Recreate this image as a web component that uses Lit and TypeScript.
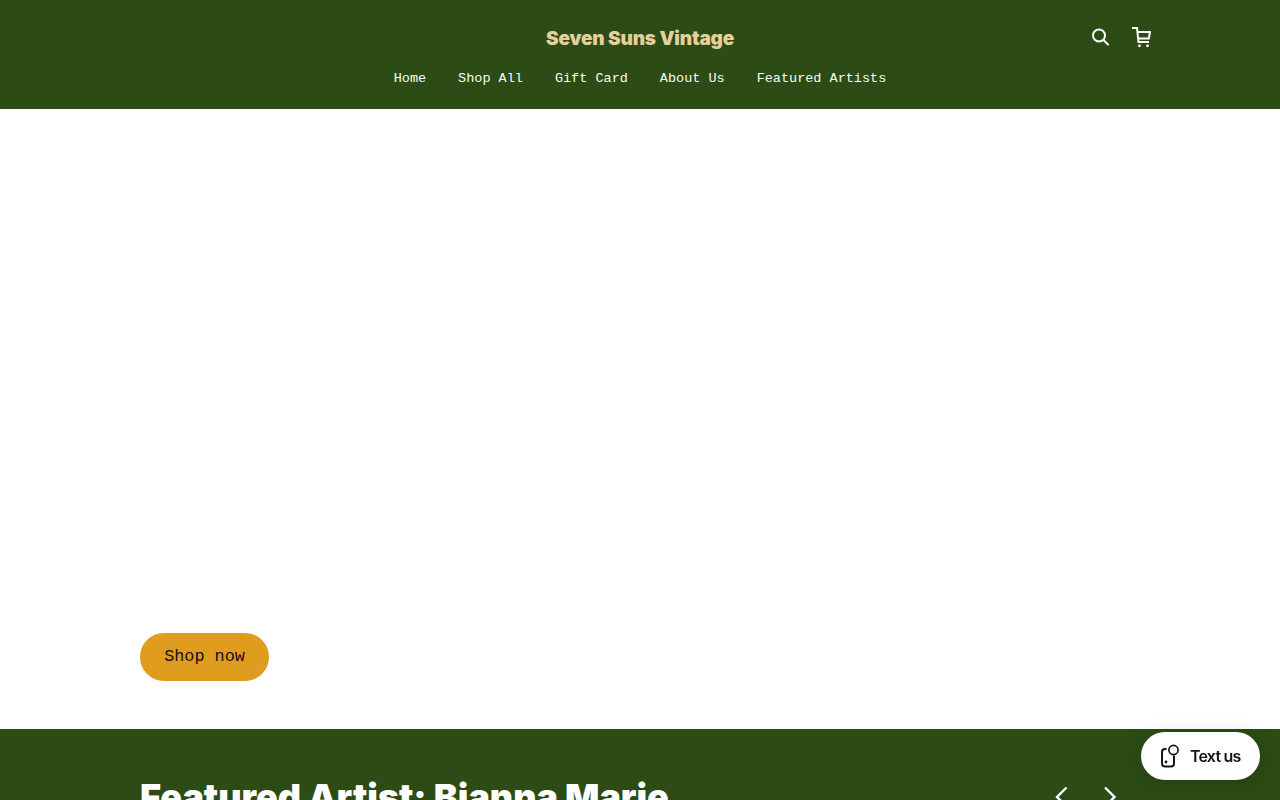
import { LitElement, html, css } from "lit";
import { customElement } from "lit/decorators.js";

@customElement("app-root")
export class AppRoot extends LitElement {
  static styles = css`
    :host { display: block; height: 800px; overflow: hidden; background: #fff; font-family: "Liberation Mono", monospace; }
    .header { background: #2c4b15; height: 109px; box-sizing: border-box; padding: 19px 130px 0; display: grid; grid-template-columns: 1fr auto 1fr; grid-template-rows: 39px auto; row-gap: 11px; }
    .brand { grid-column: 2; font-family: "Inter", sans-serif; font-weight: 900; font-size: 19px; line-height: 39px; letter-spacing: -0.18px; color: #e6cf9b; white-space: nowrap; }
    .icons { grid-column: 3; display: flex; justify-content: flex-end; align-items: flex-start; gap: 21px; padding-top: 6px; margin-right: -1px; }
    .icons svg { display: block; }
    nav { grid-column: 1 / -1; display: flex; justify-content: center; gap: 32px; font-size: 13.5px; line-height: 20px; color: #f4fff4; white-space: nowrap; }
    .hero { height: 620px; box-sizing: border-box; padding: 0 140px 48px; display: flex; align-items: flex-end; }
    .btn { height: 48px; width: 129px; box-sizing: border-box; padding-bottom: 2px; border-radius: 24px; background: #e09c1e; color: #111; font-size: 16.8px; display: flex; align-items: center; justify-content: center; }
    .featured { background: #2c4b15; height: 200px; box-sizing: border-box; padding: 46px 140px 0; display: flex; justify-content: space-between; align-items: flex-start; }
    h2 { margin: 0; font-family: "Inter", sans-serif; font-weight: 900; font-size: 36px; line-height: 44px; letter-spacing: -0.05px; color: #fff; white-space: nowrap; }
    .arrows { display: flex; gap: 32px; padding: 11px 22px 0 0; }
    .chat { position: fixed; right: 20px; bottom: 20px; width: 119px; height: 48px; border-radius: 24px; background: #fff; box-shadow: 0 4px 20px rgba(0,0,0,.18); display: flex; align-items: center; gap: 9px; padding-left: 20px; box-sizing: border-box; font-family: "Inter", sans-serif; font-weight: 600; font-size: 16px; letter-spacing: -0.8px; color: #141414; }
    .chat svg { flex: none; }
  `;
  render() {
    return html`
      <div class="header">
        <div class="brand">Seven Suns Vintage</div>
        <div class="icons">
          <svg width="20" height="24" viewBox="0 0 20 24" fill="none" stroke="#fff" stroke-width="2" stroke-linecap="round"><circle cx="9" cy="10.5" r="6"/><path d="M13.5 15l4.5 4.5"/></svg>
          <svg width="20" height="24" viewBox="0 0 20 24" fill="none" stroke="#fff" stroke-width="2"><path d="M1 3h5l1.5 14h10.5"/><path d="M6.2 7H19l-1.2 6.5H7"/><circle cx="8.5" cy="20.8" r="1.4" fill="#fff" stroke="none"/><circle cx="16.5" cy="20.8" r="1.4" fill="#fff" stroke="none"/></svg>
        </div>
        <nav><span>Home</span><span>Shop All</span><span>Gift Card</span><span>About Us</span><span>Featured Artists</span></nav>
      </div>
      <div class="hero"><div class="btn">Shop now</div></div>
      <div class="featured">
        <h2>Featured Artist: Bianna Marie</h2>
        <div class="arrows">
          <svg width="16" height="24" viewBox="0 0 16 24" fill="none" stroke="#fff" stroke-width="2.4"><path d="M12.5 1.5L3 11l9.5 9.5"/></svg>
          <svg width="16" height="24" viewBox="0 0 16 24" fill="none" stroke="#fff" stroke-width="2.4"><path d="M3 1.5L12.5 11 3 20.5"/></svg>
        </div>
      </div>
      <div class="chat">
        <svg width="20" height="24" viewBox="0 0 20 24" fill="none" stroke="#141414" stroke-width="2"><path d="M5.5 5H4a3 3 0 0 0-3 3V19.5a3 3 0 0 0 3 3h6a3 3 0 0 0 3-3v-8"/><circle cx="12.5" cy="6" r="4.6" stroke-width="1.7"/><circle cx="5" cy="18" r="1.4" fill="#141414" stroke="none"/></svg>
        <span>Text us</span>
      </div>
    `;
  }
}
